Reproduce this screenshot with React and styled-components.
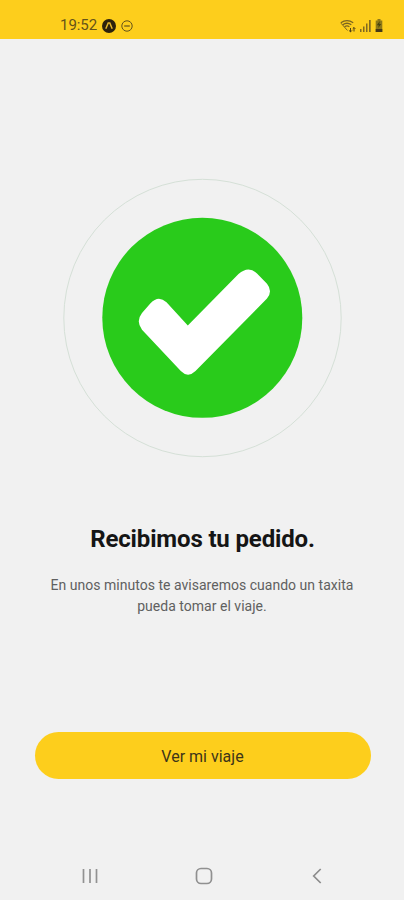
import React from "react";
import styled, { createGlobalStyle } from "styled-components";

const GlobalStyle = createGlobalStyle`
  * { box-sizing: border-box; }
  body { margin: 0; background: #f1f1f1; font-family: Roboto, "Noto Sans", sans-serif; }
`;

const Screen = styled.div`
  width: 404px;
  height: 900px;
  display: flex;
  flex-direction: column;
  background: #f1f1f1;
  overflow: hidden;
`;

const StatusBar = styled.header`
  height: 39px;
  flex: none;
  padding: 12px 21px 0 60px;
  display: flex;
  justify-content: space-between;
  background: #fdce1c;
  color: #65531a;
`;

const StatusGroup = styled.div`
  height: 27px;
  display: flex;
  align-items: center;
  gap: ${(p) => p.$gap}px;
`;

const Clock = styled.span`
  width: 37px;
  font-size: 15px;
  line-height: 27px;
  letter-spacing: -0.05px;
  white-space: nowrap;
`;

const Icon = styled.svg`
  display: block;
  flex: none;
`;

const Main = styled.main`
  flex: 1;
  display: flex;
  flex-direction: column;
  align-items: center;
  padding-top: 138px;
`;

const Title = styled.h1`
  margin: 64px 0 0 1px;
  font-size: 24px;
  line-height: 32px;
  font-weight: 700;
  letter-spacing: -0.15px;
  color: #151515;
  white-space: nowrap;
`;

const Message = styled.p`
  margin: 20px 0 0;
  font-size: 14px;
  line-height: 21px;
  letter-spacing: 0.02px;
  text-align: center;
  color: #606060;
  white-space: nowrap;
`;

const TripButton = styled.button`
  width: 336px;
  height: 47px;
  margin: 115px 0 0 1px;
  padding: 2px 0 0;
  border: 0;
  border-radius: 24px;
  background: #fdce1c;
  color: #3d3519;
  font: 400 16px/20px Roboto, sans-serif;
`;

const NavBar = styled.nav`
  height: 48px;
  flex: none;
  display: grid;
  grid-template-columns: repeat(3, 113.5px);
  justify-content: center;
  justify-items: center;
  align-items: center;
  padding-left: 3px;
`;

export default function App() {
  return (
    <>
      <GlobalStyle />
      <Screen>
        <StatusBar>
          <StatusGroup $gap={5}>
            <Clock>19:52</Clock>
            <Icon width="14" height="14" viewBox="0 0 14 14">
              <circle cx="7" cy="7" r="7" fill="#2c210c" />
              <path d="M3.8 9.8 6.2 4h1.6l2.4 5.8" fill="none" stroke="#e5b62b" strokeWidth="1.5" />
            </Icon>
            <Icon width="12" height="12" viewBox="0 0 12 12" fill="none" stroke="#65531a">
              <circle cx="6" cy="6" r="5.2" strokeWidth="1" />
              <path d="M3.2 6h5.6" strokeWidth="1.2" />
            </Icon>
          </StatusGroup>
          <StatusGroup $gap={4}>
            <Icon width="16" height="14" viewBox="0 0 16 14" fill="none" stroke="#7a6422">
              <path d="M.8 3.8Q7 -.5 13.2 3.8M2.7 5.7Q7 2.8 11.3 5.7M4.6 7.7Q7 6.2 9.4 7.7" strokeWidth="1.3" />
              <path d="M1 4.2 7.5 11.5" strokeWidth="1" />
              <path d="M10.5 9v4M8.9 11.3l1.6 1.6 1.6-1.6M14 12.5v-4M12.7 9.8 14 8.5l1.3 1.3" stroke="#514116" strokeWidth="1" />
            </Icon>
            <Icon width="11" height="12" viewBox="0 0 11 12" fill="#806923">
              <rect x="0" y="9" width="1.5" height="3" />
              <rect x="3" y="6.5" width="1.5" height="5.5" />
              <rect x="6" y="3.5" width="1.5" height="8.5" />
              <rect x="9" y="0" width="1.7" height="12" />
            </Icon>
            <Icon width="8" height="13" viewBox="0 0 8 13">
              <path d="M2.5 0h3v1.5h1.8V13H.7V1.5h1.8z" fill="#8d7818" />
              <path d="M4.8 2 1.8 6.3h2L3.2 9l3-4H4.4z" fill="#46420e" />
              <path d="M.7 10h6.6v3H.7z" fill="#463917" />
            </Icon>
          </StatusGroup>
        </StatusBar>
        <Main>
          <Icon width="282" height="282" viewBox="61 177 282 282">
            <circle cx="202.5" cy="318" r="138.7" fill="none" stroke="#d5e0d7" strokeWidth="1" />
            <circle cx="202.3" cy="317.8" r="100" fill="#29cb1b" />
            <path
              d="M187.8 325.4 238.5 274.1Q248.5 265.3 257 273.5L267 283.8Q273 291.2 267 298.6L195.5 371Q188 378.3 180.8 371L142 329.8Q135.5 321.3 142 313L150.5 303.3Q158.5 294.7 166.5 302.3Z"
              fill="#fff"
            />
          </Icon>
          <Title>Recibimos tu pedido.</Title>
          <Message>
            En unos minutos te avisaremos cuando un taxita
            <br />
            pueda tomar el viaje.
          </Message>
          <TripButton type="button">Ver mi viaje</TripButton>
        </Main>
        <NavBar>
          <Icon width="16" height="16" viewBox="0 0 16 16" stroke="#929292" strokeWidth="1.7">
            <path d="M1.5 1v14M8 1v14M14.5 1v14" />
          </Icon>
          <Icon width="18" height="18" viewBox="0 0 18 18" fill="none" stroke="#909090" strokeWidth="1.7">
            <rect x="1.5" y="1.5" width="15" height="15" rx="4.5" />
          </Icon>
          <Icon width="10" height="16" viewBox="0 0 10 16" fill="none" stroke="#8c8c8c" strokeWidth="1.7">
            <path d="M8.7 1 1.7 8l7 7" />
          </Icon>
        </NavBar>
      </Screen>
    </>
  );
}
